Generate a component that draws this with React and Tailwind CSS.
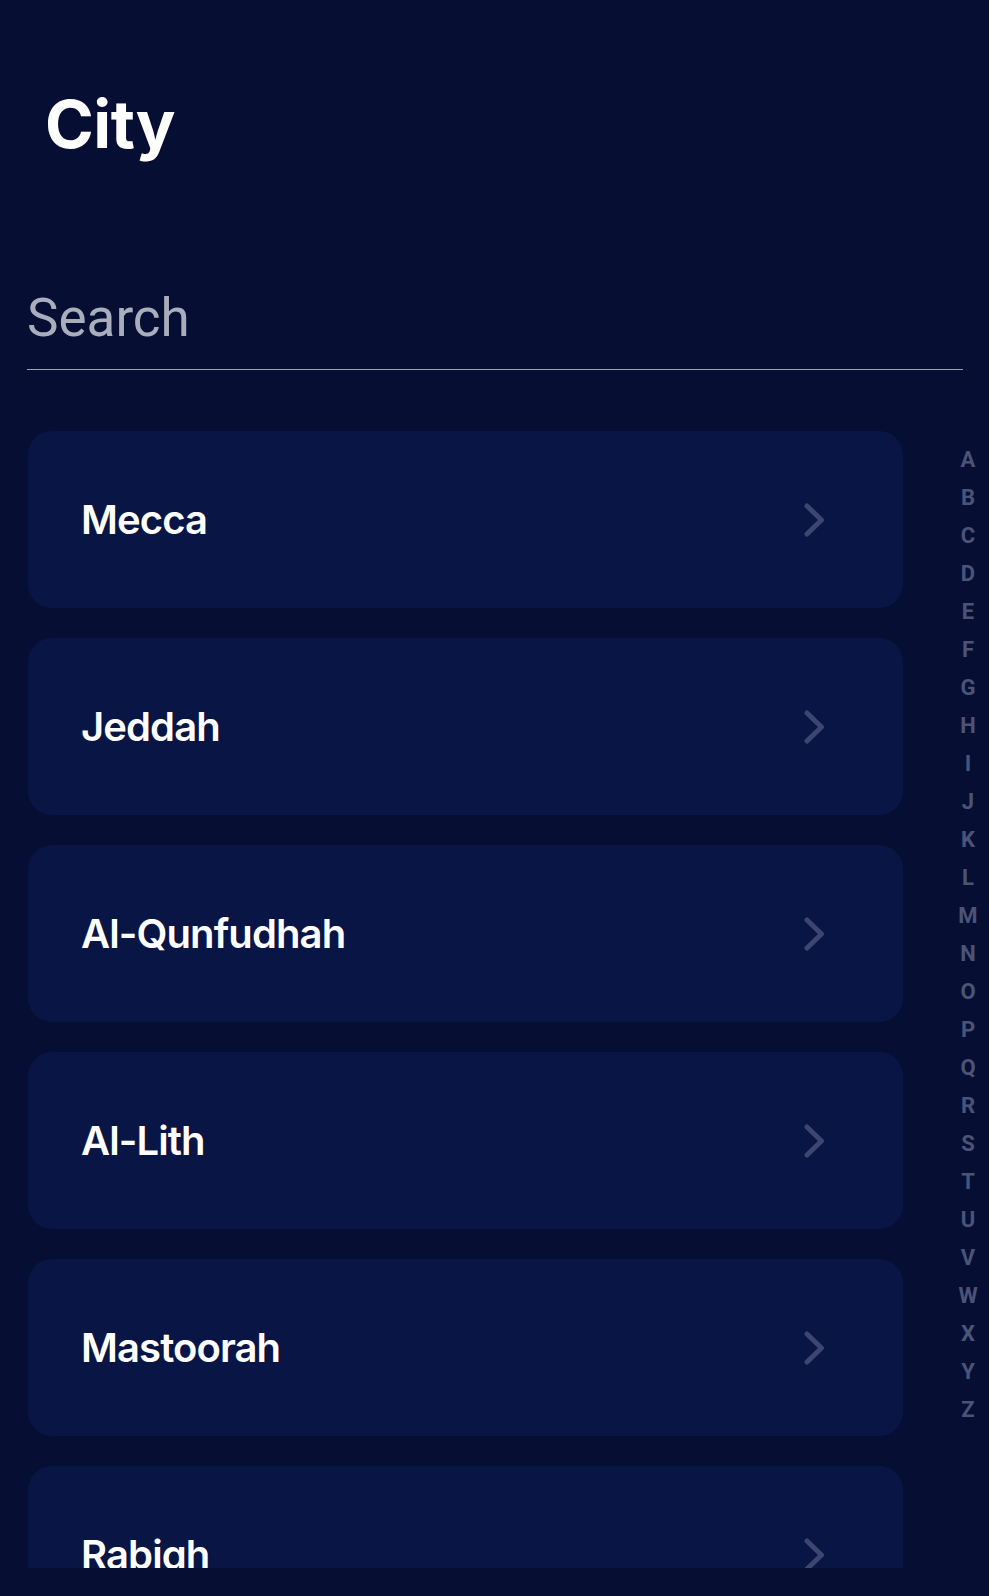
import React from "react";

const cities = ["Mecca", "Jeddah", "Al-Qunfudhah", "Al-Lith", "Mastoorah", "Rabigh"];
const letters = "ABCDEFGHIJKLMNOPQRSTUVWXYZ".split("");

function Chevron() {
  return (
    <svg width="22" height="36" viewBox="0 0 22 36" fill="none" className="shrink-0">
      <polyline
        points="4,4 18.5,18 4,32"
        stroke="#3c4670"
        strokeWidth="5"
        strokeLinecap="round"
        strokeLinejoin="round"
      />
    </svg>
  );
}

export default function App() {
  return (
    <div className="h-[1596px] w-full overflow-hidden bg-[#060f33]">
      <h1
        className="pt-[91px] pl-[45px] text-[66px] leading-none font-bold text-white tracking-[-0.5px]"
        style={{ fontFamily: "Inter, 'Noto Sans', sans-serif" }}
      >
        City
      </h1>
      <div
        className="mt-[135px] ml-[27px] w-[936px] border-b border-[#9ea3b3] pb-[24px] text-[53px] leading-none text-[#a9aebd]"
        style={{ fontFamily: "Roboto, 'Noto Sans', sans-serif" }}
      >
        Search
      </div>
      <div className="mt-[61px] flex">
        <div className="ml-[28px] flex h-[1137px] w-[875px] flex-col gap-[30px] overflow-hidden">
          {cities.map((c) => (
            <div
              key={c}
              className="flex h-[177px] shrink-0 items-center justify-between rounded-[24px] bg-[#091545] pl-[53px] pr-[78px]"
            >
              <span
                className="text-[40px] leading-none font-semibold text-white tracking-[-0.9px]"
                style={{ fontFamily: "Inter, 'Noto Sans', sans-serif" }}
              >
                {c}
              </span>
              <Chevron />
            </div>
          ))}
        </div>
        <div
          className="ml-[47px] flex w-[36px] flex-col items-center pt-[10px]"
          style={{ fontFamily: "Roboto, 'Noto Sans', sans-serif" }}
        >
          {letters.map((l) => (
            <span key={l} className="text-[22px] leading-[38px] font-bold text-[#4b5478]">
              {l}
            </span>
          ))}
        </div>
      </div>
    </div>
  );
}
